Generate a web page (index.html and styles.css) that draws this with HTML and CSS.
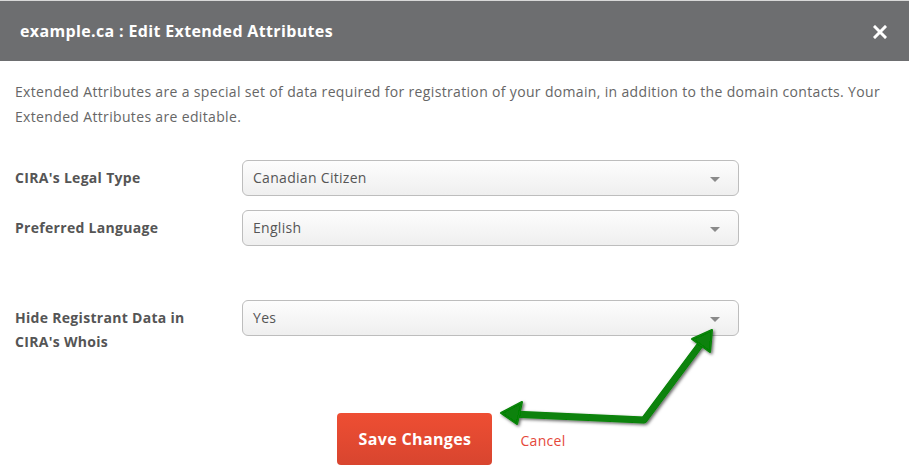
FILE: index.html
```html
<!DOCTYPE html>
<html>
<head>
<meta charset="utf-8">
<link rel="stylesheet" href="styles.css">
</head>
<body>
<div class="modal">
  <div class="modal-header">
    <h1 class="modal-title">example.ca : Edit Extended Attributes</h1>
    <span class="close" aria-label="Close">
      <svg width="14" height="14" viewBox="0 0 14 14"><path d="M2 2 L12 12 M12 2 L2 12" stroke="#fff" stroke-width="3" stroke-linecap="square"/></svg>
    </span>
  </div>
  <div class="modal-body">
    <p class="intro">Extended Attributes are a special set of data required for registration of your domain, in addition to the domain contacts. Your Extended Attributes are editable.</p>
    <div class="form">
      <div class="row">
        <label class="label">CIRA's Legal Type</label>
        <div class="select"><span>Canadian Citizen</span><i class="caret"></i></div>
      </div>
      <div class="row">
        <label class="label">Preferred Language</label>
        <div class="select"><span>English</span><i class="caret"></i></div>
      </div>
      <div class="row row-spaced">
        <label class="label">Hide Registrant Data in<br>CIRA's Whois</label>
        <div class="select"><span>Yes</span><i class="caret"></i></div>
      </div>
    </div>
    <div class="actions">
      <button class="btn-save">Save Changes</button>
      <a class="cancel">Cancel</a>
    </div>
  </div>
  <svg class="arrow" width="909" height="473" viewBox="0 0 909 473">
    <defs>
      <filter id="sh" x="-20%" y="-20%" width="140%" height="140%">
        <feDropShadow dx="1.5" dy="1.5" stdDeviation="1.5" flood-color="#000" flood-opacity="0.6"/>
      </filter>
    </defs>
    <g filter="url(#sh)" fill="#078207" stroke="#078207">
      <polyline points="512,414 644,420 703,341" fill="none" stroke-width="7" stroke-linejoin="round" stroke-linecap="round"/>
      <polygon points="501,413 522,402 517,424" stroke-width="2" stroke-linejoin="round"/>
      <polygon points="712,330 710,352 692,339" stroke-width="2" stroke-linejoin="round"/>
    </g>
  </svg>
</div>
</body>
</html>
```

FILE: styles.css
```css
* { box-sizing: border-box; }
html, body { margin: 0; padding: 0; background: #fff; }
body { font-family: "Open Sans", "Liberation Sans", Arial, sans-serif; letter-spacing: 0.3px; }
.modal { position: relative; width: 909px; height: 473px; overflow: hidden; border-top: 1px solid #d8d8d8; }
.modal-header {
  height: 60px;
  background: #6d6e70;
  display: flex;
  align-items: center;
  justify-content: space-between;
  padding: 0 22px 0 20px;
}
.modal-title { margin: 0; color: #fff; font-size: 16px; font-weight: 700; letter-spacing: 0.35px; }
.close { display: flex; width: 14px; height: 14px; margin-top: 2px; }
.modal-body { padding: 0 15px; }
.intro { margin: 18px 0 0; color: #666; font-size: 14px; line-height: 25px; letter-spacing: 0.34px; }
.form { margin-top: 31px; display: flex; flex-direction: column; gap: 14px; }
.row { display: grid; grid-template-columns: 227px 497px; align-items: start; }
.row-spaced { margin-top: 40px; }
.label { padding-top: 6px; color: #555; font-size: 14px; font-weight: 700; line-height: 24px; }
.select {
  height: 36px;
  border: 1px solid #bdbdbd;
  border-radius: 6px;
  background: linear-gradient(#fdfdfd, #efefef);
  display: flex;
  align-items: center;
  justify-content: space-between;
  padding: 0 18px 0 10px;
  color: #555;
  font-size: 14px;
}
.select span { margin-top: -2px; }
.caret { width: 0; height: 0; border-left: 5px solid transparent; border-right: 5px solid transparent; border-top: 5px solid #8a8a8a; margin-top: 2px; letter-spacing: 0; }
.actions { margin-top: 59px; display: flex; justify-content: center; align-items: center; gap: 28px; padding-right: 6px; }
.btn-save {
  width: 155px; height: 52px;
  border: 0; border-radius: 4px;
  background: linear-gradient(#ee4e33, #d8452f);
  color: #fff; font-family: inherit; font-size: 16px; font-weight: 700; letter-spacing: 0.35px;
}
.cancel { color: #e5483a; font-size: 14px; margin-top: 3px; }
.arrow { position: absolute; left: 0; top: -1px; pointer-events: none; }
```
